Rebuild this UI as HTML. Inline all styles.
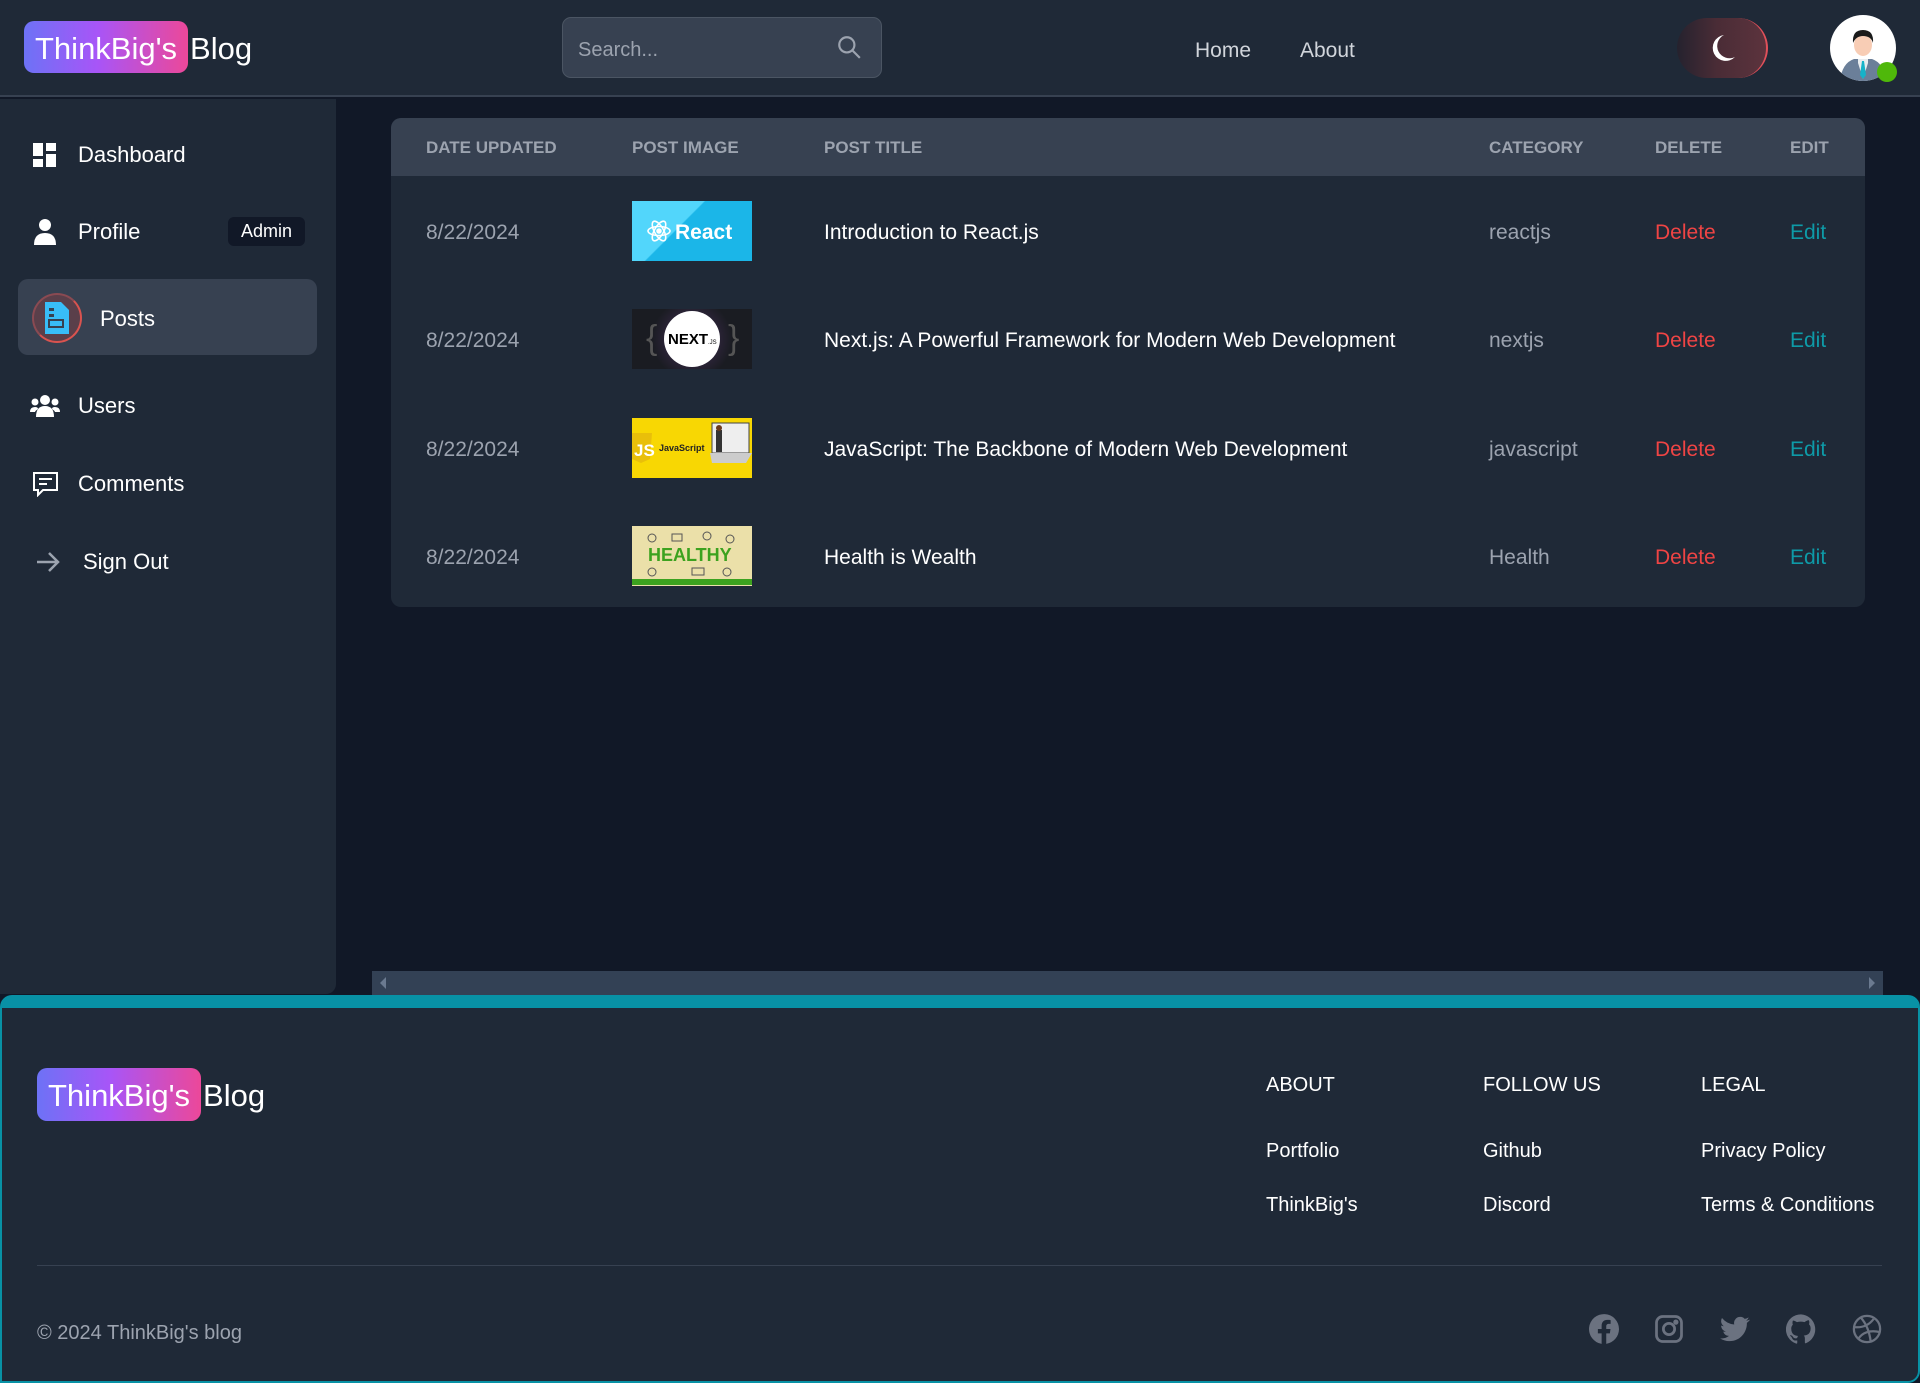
<!DOCTYPE html>
<html><head><meta charset="utf-8"><style>
*{box-sizing:border-box;margin:0;padding:0}
body{width:1920px;height:1383px;background:#111827;font-family:"Liberation Sans",sans-serif;position:relative;overflow:hidden;color:#fff}
.abs{position:absolute}
.hdr{left:0;top:0;width:1920px;height:97px;background:#1f2937;border-bottom:2px solid #374151}
.badge{background:linear-gradient(90deg,#6d72f6,#a855f7 45%,#ec4899);border-radius:10px;color:#fff}
.logo{font-size:31px;white-space:nowrap}
.side{left:0;top:99px;width:336px;height:895px;background:#1f2937;border-radius:0 0 10px 0}
.item{position:absolute;left:0;font-size:22px;color:#fff;display:flex;align-items:center}
.tbl{left:391px;top:118px;width:1474px;height:489px;background:#1f2937;border-radius:10px;overflow:hidden}
.th{position:absolute;top:0;left:0;width:100%;height:58px;background:#374151}
.h{position:absolute;top:1px;line-height:58px;font-size:17px;font-weight:bold;color:#9ca3af}
.c{position:absolute;font-size:21px;line-height:24px;transform:translateY(-10px)}
.img{position:absolute;left:241px;width:120px;height:60px;overflow:hidden}
.foot{left:0;top:995px;width:1920px;height:388px;background:#1f2937;border:2px solid #0891a5;border-top:13px solid #0891a5;border-radius:12px 12px 12px 0}
.fh{position:absolute;font-size:20px;color:#fff}
.ic{position:absolute;top:1314px;width:30px;height:30px}
</style></head><body>
<div class="abs hdr"></div>
<div class="abs logo" style="left:24px;top:21px;height:52px;display:flex;align-items:center"><span class="badge" style="padding:3px 11px 0;line-height:49px">ThinkBig's</span><span style="margin-left:2px;padding-top:3px">Blog</span></div>
<div class="abs" style="left:562px;top:17px;width:320px;height:61px;background:#374151;border:1px solid #4b5563;border-radius:9px"></div>
<div class="abs" style="left:578px;top:39px;font-size:20px;color:#9ca3af">Search...</div>
<svg class="abs" style="left:836px;top:34px" width="26" height="26" viewBox="0 0 24 24" fill="none" stroke="#9ca3af" stroke-width="2"><circle cx="10" cy="10" r="7"/><path d="M15 15l7 7"/></svg>
<div class="abs" style="left:1195px;top:39px;font-size:21px;color:#d1d5db">Home</div>
<div class="abs" style="left:1300px;top:39px;font-size:21px;color:#d1d5db">About</div>
<div class="abs" style="left:1677px;top:18px;width:91px;height:60px;border-radius:30px;background:linear-gradient(90deg,#25222e,#4a2c36 45%,#5c333d);border-right:2px solid #e0505a"></div>
<svg class="abs" style="left:1708px;top:33px" width="28" height="30" viewBox="0 0 28 30"><path d="M16 2A13 13 0 1 0 27 24 11 11 0 0 1 16 2z" fill="#fff"/></svg>
<div class="abs" style="left:1830px;top:15px;width:66px;height:66px;border-radius:50%;background:#fff;overflow:hidden">
<svg width="66" height="66" viewBox="0 0 66 66"><path d="M10 66 Q12 48 24 44 L42 44 Q54 48 56 66z" fill="#6b7f99"/><path d="M28 44h10v4l-5 16-5-16z" fill="#e8ecef"/><path d="M32 46h2l2 14-3 4-3-4z" fill="#17b3c9"/><ellipse cx="33" cy="30" rx="9" ry="11" fill="#f8cdb5"/><path d="M23 28Q22 15 33 15 44 15 43 28 41 21 33 21 26 21 23 28z" fill="#1a1a1a"/></svg></div>
<div class="abs" style="left:1877px;top:62px;width:20px;height:20px;border-radius:50%;background:#4fb80a"></div>

<div class="abs side"></div>
<div class="item" style="left:33px;top:142px"><svg width="24" height="24" viewBox="0 0 24 24" fill="#fff"><rect x="0" y="0" width="10" height="13"/><rect x="13" y="0" width="10" height="8"/><rect x="0" y="16" width="10" height="8"/><rect x="13" y="11" width="10" height="13"/></svg><span style="margin-left:21px">Dashboard</span></div>
<div class="item" style="left:34px;top:219px"><svg width="22" height="26" viewBox="0 0 22 26" fill="#fff"><circle cx="11" cy="6" r="6"/><path d="M0 26Q0 14 11 14 22 14 22 26z"/></svg><span style="margin-left:22px">Profile</span></div>
<div class="abs" style="left:228px;top:217px;width:77px;height:29px;background:#111827;border-radius:6px;font-size:18px;line-height:29px;text-align:center">Admin</div>
<div class="abs" style="left:18px;top:279px;width:299px;height:76px;background:#374151;border-radius:10px"></div>
<div class="abs" style="left:32px;top:293px;width:50px;height:50px;border-radius:50%;background:#5a3f4a;border:2px solid #d9534f;border-top-color:#8a4a52;border-left-color:#8a4a52"></div>
<svg class="abs" style="left:45px;top:302px" width="24" height="32" viewBox="0 0 24 32"><path d="M0 0h16l8 8v24H0z" fill="#38bdf8"/><rect x="4" y="6" width="5" height="3" fill="#374151"/><rect x="4" y="12" width="5" height="3" fill="#374151"/><rect x="4" y="18" width="14" height="7" fill="none" stroke="#374151" stroke-width="2"/></svg>
<div class="item" style="left:100px;top:306px"><span>Posts</span></div>
<div class="item" style="left:30px;top:393px"><svg width="30" height="22" viewBox="0 0 30 22" fill="#fff"><circle cx="15" cy="5" r="5"/><circle cx="5" cy="7" r="3.5"/><circle cx="25" cy="7" r="3.5"/><path d="M6 22Q6 11 15 11 24 11 24 22z"/><path d="M0 17Q0 12 5 12 8 12 8 14 5 16 5 17z"/><path d="M30 17Q30 12 25 12 22 12 22 14 25 16 25 17z"/></svg><span style="margin-left:18px">Users</span></div>
<div class="item" style="left:33px;top:471px"><svg width="25" height="25" viewBox="0 0 25 25" fill="none" stroke="#fff" stroke-width="2"><path d="M1 1h23v17H10l-5 5v-5H1z"/><path d="M6 7h13M6 12h8"/></svg><span style="margin-left:20px">Comments</span></div>
<div class="item" style="left:36px;top:549px"><svg width="24" height="22" viewBox="0 0 24 22" fill="none" stroke="#9ca3af" stroke-width="2.5"><path d="M1 11h21M13 2l9 9-9 9"/></svg><span style="margin-left:23px">Sign Out</span></div>

<div class="abs tbl">
<div class="th"></div>
<div class="h" style="left:35px">DATE UPDATED</div>
<div class="h" style="left:241px">POST IMAGE</div>
<div class="h" style="left:433px">POST TITLE</div>
<div class="h" style="left:1098px">CATEGORY</div>
<div class="h" style="left:1264px">DELETE</div>
<div class="h" style="left:1399px">EDIT</div>

<div class="c" style="left:35px;top:113px;color:#9ca3af">8/22/2024</div>
<div class="img" style="top:83px;background:linear-gradient(135deg,#52d6fb 40%,#1bb6e8 41%)"><svg width="120" height="60"><g transform="translate(27,30)" fill="none" stroke="#fff" stroke-width="1.6"><ellipse rx="11" ry="4.5"/><ellipse rx="11" ry="4.5" transform="rotate(60)"/><ellipse rx="11" ry="4.5" transform="rotate(-60)"/><circle r="2" fill="#fff"/></g><text x="43" y="38" font-family="Liberation Sans" font-weight="bold" font-size="21" fill="#fff">React</text></svg></div>
<div class="c" style="left:433px;top:113px">Introduction to React.js</div>
<div class="c" style="left:1098px;top:113px;color:#9ca3af">reactjs</div>
<div class="c" style="left:1264px;top:113px;color:#ef4444">Delete</div>
<div class="c" style="left:1399px;top:113px;color:#0e9aa7">Edit</div>

<div class="c" style="left:35px;top:221px;color:#9ca3af">8/22/2024</div>
<div class="img" style="top:191px;background:radial-gradient(circle at 50% 50%,#3a2a4a 20%,#1a1c22 60%)"><svg width="120" height="60"><text x="14" y="40" font-size="34" fill="#555" font-family="Liberation Sans">{</text><text x="96" y="40" font-size="34" fill="#555" font-family="Liberation Sans">}</text><circle cx="60" cy="30" r="28" fill="#fff"/><text x="36" y="35" font-family="Liberation Sans" font-weight="bold" font-size="15" fill="#000">NEXT</text><text x="76" y="35" font-size="6" fill="#000">.JS</text></svg></div>
<div class="c" style="left:433px;top:221px">Next.js: A Powerful Framework for Modern Web Development</div>
<div class="c" style="left:1098px;top:221px;color:#9ca3af">nextjs</div>
<div class="c" style="left:1264px;top:221px;color:#ef4444">Delete</div>
<div class="c" style="left:1399px;top:221px;color:#0e9aa7">Edit</div>

<div class="c" style="left:35px;top:330px;color:#9ca3af">8/22/2024</div>
<div class="img" style="top:300px;background:#f8d703"><svg width="120" height="60"><path d="M0 15h20l-2 26-9 4-9-4z" fill="#e9bf0a"/><text x="2" y="38" font-family="Liberation Sans" font-weight="bold" font-size="17" fill="#fff">JS</text><text x="27" y="33" font-family="Liberation Sans" font-weight="bold" font-size="9" fill="#222">JavaScript</text><rect x="80" y="5" width="37" height="30" fill="#eee" stroke="#444"/><path d="M78 35h42l-6 10H80z" fill="#ccc"/><rect x="84" y="12" width="6" height="22" fill="#333"/><circle cx="87" cy="10" r="3" fill="#6b3a1e"/></svg></div>
<div class="c" style="left:433px;top:330px">JavaScript: The Backbone of Modern Web Development</div>
<div class="c" style="left:1098px;top:330px;color:#9ca3af">javascript</div>
<div class="c" style="left:1264px;top:330px;color:#ef4444">Delete</div>
<div class="c" style="left:1399px;top:330px;color:#0e9aa7">Edit</div>

<div class="c" style="left:35px;top:438px;color:#9ca3af">8/22/2024</div>
<div class="img" style="top:408px;background:#ebe0a9"><svg width="120" height="60"><g stroke="#555" fill="none" stroke-width="1"><circle cx="20" cy="12" r="4"/><rect x="40" y="8" width="10" height="7"/><circle cx="75" cy="10" r="4"/><circle cx="98" cy="13" r="4"/><circle cx="20" cy="46" r="4"/><rect x="60" y="42" width="12" height="7"/><circle cx="95" cy="46" r="4"/></g><text x="16" y="35" font-family="Liberation Sans" font-weight="bold" font-size="18" fill="#3ca21f">HEALTHY</text><rect x="0" y="53" width="120" height="6" fill="#3ca21f"/></svg></div>
<div class="c" style="left:433px;top:438px">Health is Wealth</div>
<div class="c" style="left:1098px;top:438px;color:#9ca3af">Health</div>
<div class="c" style="left:1264px;top:438px;color:#ef4444">Delete</div>
<div class="c" style="left:1399px;top:438px;color:#0e9aa7">Edit</div>
</div>

<div class="abs" style="left:372px;top:971px;width:1511px;height:25px;background:#334155"></div>
<svg class="abs" style="left:380px;top:977px" width="6" height="12"><path d="M6 0v12L0 6z" fill="#6b7a90"/></svg>
<svg class="abs" style="left:1869px;top:977px" width="6" height="12"><path d="M0 0v12L6 6z" fill="#6b7a90"/></svg>

<div class="abs foot"></div>
<div class="abs logo" style="left:37px;top:1068px;height:53px;display:flex;align-items:center"><span class="badge" style="padding:3px 11px 0;line-height:50px">ThinkBig's</span><span style="margin-left:2px;padding-top:3px">Blog</span></div>
<div class="fh" style="left:1266px;top:1074px">ABOUT</div>
<div class="fh" style="left:1483px;top:1074px">FOLLOW US</div>
<div class="fh" style="left:1701px;top:1074px">LEGAL</div>
<div class="fh" style="left:1266px;top:1140px">Portfolio</div>
<div class="fh" style="left:1266px;top:1194px">ThinkBig's</div>
<div class="fh" style="left:1483px;top:1140px">Github</div>
<div class="fh" style="left:1483px;top:1194px">Discord</div>
<div class="fh" style="left:1701px;top:1140px">Privacy Policy</div>
<div class="fh" style="left:1701px;top:1194px">Terms &amp; Conditions</div>
<div class="abs" style="left:37px;top:1265px;width:1845px;height:1px;background:#374151"></div>
<div class="abs" style="left:37px;top:1322px;font-size:20px;color:#9ca3af">© 2024 ThinkBig's blog</div>
<svg class="ic" style="left:1589px" viewBox="0 0 24 24"><path fill="#6b7280" d="M24 12a12 12 0 1 0-13.9 11.9v-8.4H7.1V12h3V9.4c0-3 1.8-4.7 4.5-4.7 1.3 0 2.7.2 2.7.2v3h-1.5c-1.5 0-2 .9-2 1.9V12h3.4l-.5 3.5h-2.9v8.4A12 12 0 0 0 24 12z"/></svg>
<svg class="ic" style="left:1654px" viewBox="0 0 24 24" fill="none" stroke="#6b7280" stroke-width="2.2"><rect x="2" y="2" width="20" height="20" rx="5"/><circle cx="12" cy="12" r="4.5"/><circle cx="17.5" cy="6.5" r="1" fill="#6b7280"/></svg>
<svg class="ic" style="left:1720px" viewBox="0 0 24 24"><path fill="#6b7280" d="M23.6 4.6c-.9.4-1.8.6-2.8.8 1-.6 1.8-1.6 2.1-2.7-1 .6-2 1-3.1 1.2a4.9 4.9 0 0 0-8.4 4.5A14 14 0 0 1 1.6 3.2a4.9 4.9 0 0 0 1.5 6.6c-.8 0-1.6-.3-2.2-.6 0 2.4 1.7 4.4 3.9 4.8-.7.2-1.5.2-2.2.1.6 2 2.4 3.4 4.6 3.4A9.9 9.9 0 0 1 0 19.5 14 14 0 0 0 7.5 21.7c9.1 0 14-7.5 14-14v-.6c1-.7 1.8-1.6 2.5-2.5z"/></svg>
<svg class="ic" style="left:1786px" viewBox="0 0 24 24"><path fill="#6b7280" d="M12 .3a12 12 0 0 0-3.8 23.4c.6.1.8-.3.8-.6v-2c-3.3.7-4-1.6-4-1.6-.6-1.4-1.4-1.8-1.4-1.8-1-.7.1-.7.1-.7 1.2.1 1.8 1.2 1.8 1.2 1 1.8 2.8 1.3 3.5 1 0-.8.4-1.3.7-1.6-2.7-.3-5.5-1.3-5.5-6 0-1.2.5-2.3 1.3-3.1-.2-.4-.6-1.6 0-3.2 0 0 1-.3 3.3 1.2a11.5 11.5 0 0 1 6 0C17.3 4.6 18.3 5 18.3 5c.7 1.6.2 2.8.1 3.2.8.8 1.3 1.9 1.3 3.2 0 4.6-2.8 5.6-5.5 5.9.5.4.9 1 .9 2.2v3.3c0 .3.1.7.8.6A12 12 0 0 0 12 .3z"/></svg>
<svg class="ic" style="left:1852px" viewBox="0 0 24 24" fill="none" stroke="#6b7280" stroke-width="1.8"><circle cx="12" cy="12" r="10.5"/><path d="M7 2.8c4 4.5 7 11 8 19.6M1.8 10.5c5 .5 11-.5 15.5-6.5M5 20c3-5 9-7.5 17.5-5.5"/></svg>
</body></html>
